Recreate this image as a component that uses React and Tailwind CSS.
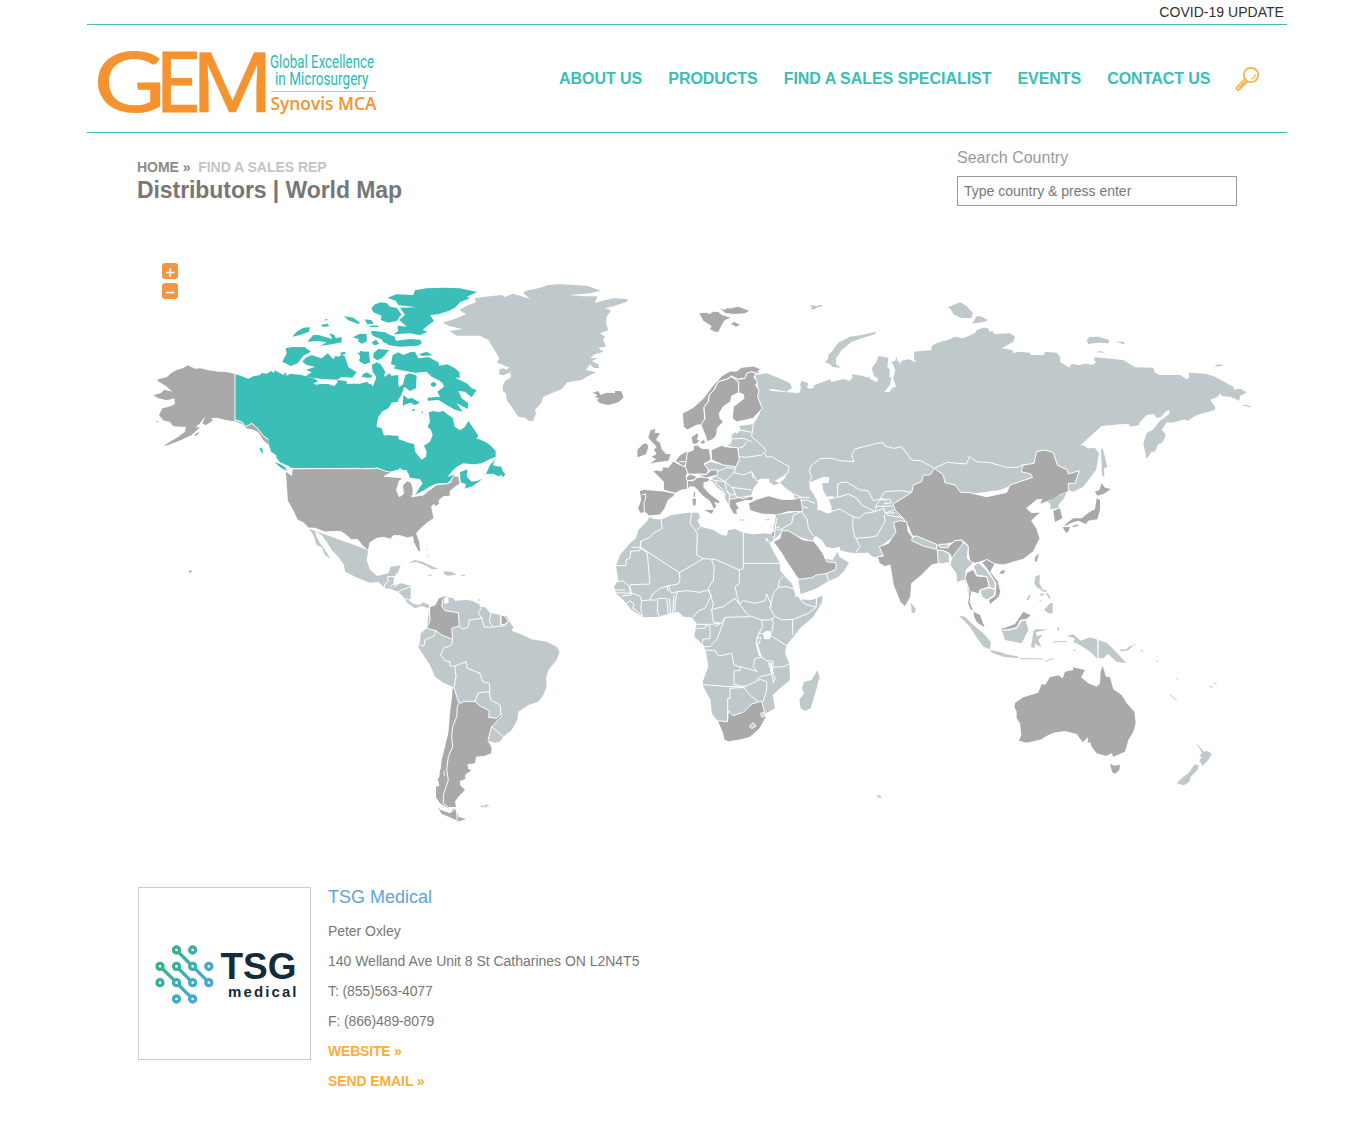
const LIGHT = "#bfc8cb";
const GRAY = "#a9a9a9";
const TEAL = "#3bbdb8";

// Each region is drawn on its own local grid (3 units per pixel).
function Region({ x, y, children }) {
  return (
    <g transform={`translate(${x} ${y}) scale(0.33333)`} strokeLinejoin="round">
      {children}
    </g>
  );
}
const Land = ({ c, d, edge }) => (
  <path d={d} fill={c} stroke={edge ? "#fff" : "none"} strokeWidth={edge ? 3 : 0} />
);
const Borders = ({ d, w = 3 }) => <path d={d} fill="none" stroke="#fff" strokeWidth={w} />;
const Specks = ({ d, c = LIGHT, w = 3 }) => <path d={d} fill="none" stroke={c} strokeWidth={w} />;

function WorldMap() {
  return (
    <svg className="block h-[610px] w-[1163px]" viewBox="137 240 1163 610" aria-label="World map">
      {/* Russia and the north of Asia */}
      <Region x={800} y={290}>
        <Land c={LIGHT} d="M-120,300 L0,310 5,275 25,282 18,298 40,295 42,286 90,268 95,276 130,267 150,272 158,262 155,252 190,258 232,277 234,265 222,258 215,235 228,218 236,198 265,203 262,230 270,240 268,262 274,262 270,285 253,305 268,307 276,295 288,290 280,265 286,240 275,215 285,213 290,200 292,212 298,216 298,225 306,212 325,208 348,217 342,205 342,185 395,180 395,168 412,158 450,148 465,140 490,145 525,130 530,120 550,113 565,115 568,124 580,125 582,132 630,130 645,140 640,155 605,175 637,180 640,190 655,185 690,188 692,195 732,195 735,185 770,188 781,202 780,215 808,233 815,222 840,226 850,221 880,224 888,216 882,210 885,202 970,210 1005,232 1060,233 1065,248 1080,255 1140,255 1160,268 1168,262 1165,248 1215,251 1240,258 1300,290 1305,302 1308,296 1325,298 1340,308 1320,318 1318,332 1290,320 1265,318 1262,310 1252,320 1230,330 1245,350 1245,360 1190,375 1162,393 1155,388 1115,398 1100,397 1085,420 1097,432 1094,445 1085,460 1075,462 1065,485 1055,485 1040,508 1030,460 1040,430 1060,418 1080,392 1108,372 1108,360 1096,365 1085,380 1070,384 1062,372 1040,375 1018,398 1018,405 992,410 985,402 960,403 905,408 842,465 855,468 860,475 885,474 897,490 888,540 850,590 820,605 805,600 780,560 700,560 600,600 300,640 0,660 -120,640Z" />
        <Land c={LIGHT} d="M75,217 L85,205 85,195 100,180 105,170 115,158 150,140 185,135 228,125 225,133 185,145 155,155 125,180 108,205 108,222 122,233 98,231 90,222Z M443,52 L480,37 500,48 518,68 515,83 498,85 480,83 460,72 452,58Z M517,101 L530,78 545,80 563,90 555,95Z M860,150 L870,141 895,140 928,150 925,160 895,158 865,162Z M943,153 L962,155 978,158 970,163Z M888,187 L902,183 914,188Z M1243,230 L1255,222 1270,227Z M28,47 L38,45 48,48 65,44 67,48 50,53 45,58 32,58 36,51Z M903,478 L908,475 912,490 922,530 912,535 913,563 906,555Z" />
        <Specks c={GRAY} d="M1330,346 L1340,347 1352,351" w={2.5} />
      </Region>

      {/* Europe */}
      <Region x={610} y={290}>
        <Land c={LIGHT} d="M282,525 L300,515 340,525 378,530 387,510 385,475 353,467 365,458 365,435 378,427 380,432 392,420 388,408 430,402 440,388 457,355 443,320 445,290 435,255 470,250 500,262 540,280 546,293 530,305 495,298 475,298 490,308 487,325 495,338 508,340 515,328 540,325 540,315 560,313 578,300 570,285 575,272 595,280 588,290 600,298 780,260 780,690 575,680 575,640 420,620 400,628 362,630 357,645 345,625 347,612 320,590 312,578 298,570 320,557 322,540 300,540Z" />
        <Land c={LIGHT} d="M500,715 L500,675 580,662 600,650 780,640 780,722 500,722Z" />
        <path fill="#fff" d="M598,578 L640,560 658,562 656,578 636,580 640,602 650,620 670,618 668,628 655,625 665,650 664,668 640,672 622,660 622,635 612,615 600,598Z M422,620 L430,595 442,580 450,566 478,566 478,576 492,586 512,578 522,590 552,612 554,632 525,640 480,640 432,638Z M494,572 L515,560 530,556 522,568 508,580Z" />
        <Land c={GRAY} edge d="M217,370 L250,352 280,325 310,285 335,258 360,243 380,243 395,232 430,228 455,238 444,244 450,250 440,250 425,245 410,252 405,265 385,268 365,258 350,268 325,275 312,300 298,315 295,335 282,352 284,390 275,405 262,405 232,420 220,410Z" />
        <Land c={GRAY} edge d="M365,260 L385,275 386,308 365,318 362,335 340,350 328,370 330,385 340,395 322,415 320,435 310,448 292,455 285,435 273,405 285,385 282,352 295,335 298,315 312,300 325,275 350,268Z" />
        <Land c={GRAY} edge d="M365,260 L385,268 405,265 410,250 425,245 437,250 432,262 442,275 437,285 447,300 443,320 457,355 430,385 380,396 367,385 370,350 402,325 400,313 386,308 386,276Z" />
        <Land c={GRAY} d="M268,70 L290,68 298,73 310,65 325,66 335,75 362,83 345,90 338,100 325,125 315,125 300,118 305,108 280,92Z M330,55 L345,60 352,54 358,56 385,50 417,62 405,70 370,72 345,68Z M362,102 L375,95 378,100 390,103 378,111 372,106Z M122,420 L137,417 133,428 150,430 138,450 150,458 155,478 168,492 182,493 175,512 140,517 120,521 138,508 125,500 140,492 132,480 140,470 125,455 115,442Z M82,480 L98,463 110,460 115,470 108,493 82,502Z M245,442 L262,430 265,437 260,448 268,452 258,462 248,460Z M272,455 L282,450 285,458 276,462Z M283,660 L312,659 305,671Z M247,626 L258,626 257,646 249,646Z M251,607 L256,607 255,622 251,620Z" />
        <Land c={GRAY} edge d="M128,543 L140,540 155,543 158,530 175,532 190,513 205,522 225,530 234,545 228,560 235,575 232,598 215,600 195,610 160,600 160,575Z" />
        <Land c={GRAY} edge d="M88,603 L100,598 160,603 195,610 192,618 175,630 165,655 150,675 115,678 108,668 90,670 83,655 92,630Z" />
        <Land c={GRAY} edge d="M195,513 L210,495 232,482 232,515 222,530Z" />
        <Land c={GRAY} edge d="M232,487 L250,480 250,466 262,465 275,475 298,476 303,510 282,522 296,540 290,553 262,552 235,553 226,530Z" />
        <Land c={GRAY} edge d="M303,480 L335,466 345,470 383,473 388,508 378,530 340,525 305,510Z" />
        <Land c={GRAY} edge d="M232,572 L250,572 262,562 290,560 298,568 296,575 282,578 282,592 300,612 330,634 326,642 315,637 320,648 312,660 300,635 275,615 255,592 240,590 232,598Z" />
        <Land c={GRAY} edge d="M228,562 L240,552 262,560 250,570 232,572Z M262,556 L290,553 302,540 322,540 322,555 290,564Z" />
        <Land c={GRAY} edge d="M358,628 L392,622 418,618 430,620 428,632 405,632 378,640 388,655 380,660 382,674 370,672 357,648Z" />
        <Land c={GRAY} edge d="M415,640 L440,628 475,617 515,628 550,628 573,622 578,665 535,665 500,675 455,672 420,662Z" />
        <Borders d="M107,612 L107,625 102,640 103,668 M95,615 L107,612 M208,515 L225,515 M388,420 L425,427 M365,447 L400,445 425,455 M385,475 L400,470 410,455 M430,402 L425,440 460,470 468,482 455,495 410,502 387,500 M465,490 L470,502 488,500 505,512 538,530 533,550 520,556 M378,530 L372,548 400,555 425,545 440,572 448,570 M425,545 L430,565 M378,535 L350,533 322,545 M320,560 L345,575 375,545 M345,575 L365,592 425,600 M300,568 L320,572 345,575 M368,592 L378,620 M345,575 L350,600 360,615 378,612 M316,570 L318,580 345,605 M378,620 L400,626 425,618 M348,605 L360,612 358,628" />
        <Borders d="M552,612 L575,622 600,622 M570,632 L590,630 615,640 M580,650 L595,655 M578,665 L595,700 M598,578 L605,560 598,545 603,527 632,505 665,505 700,515 728,512 722,490 780,468 M683,622 L683,582 705,577 745,600 780,602 M655,628 L690,620 705,610 740,628 780,655 M660,665 L690,657 720,665 730,685 M735,685 L780,655" />
        <Specks d="M388,690 L404,690 M466,690 L478,688" />
      </Region>

      {/* Africa and the Middle East */}
      <Region x={600} y={480}>
        <Land c={LIGHT} d="M528,105 L605,95 660,90 690,105 810,80 810,215 765,218 725,212 718,200 700,205 678,200 665,180 648,168 640,172 640,184 580,165 545,155 520,182 518,160Z" />
        <Land c={LIGHT} d="M672,228 L680,238 700,236 712,215 718,230 747,248 730,275 715,290 688,302 650,325 602,343 595,298 640,280Z" />
        <Land c={GRAY} edge d="M545,153 L565,152 610,180 640,183 655,200 670,222 680,245 708,248 708,268 680,280 650,285 635,293 597,298 590,290 560,245 545,220 520,185 540,175Z" />
        <Borders d="M605,95 L622,120 625,145 640,168 M530,150 L545,147 575,130 580,105 605,95 M545,155 L548,148 M525,145 L540,140 M530,115 L525,150 522,182 M680,280 L685,302 M672,232 L700,240 M520,150 L515,180" />
        <Land c={GRAY} d="M515,158 L522,155 522,168 517,168Z" />
        <Land c={LIGHT} d="M148,112 L165,118 185,118 215,105 265,98 295,98 300,112 292,122 302,140 340,150 365,165 380,167 385,150 405,147 430,158 460,163 490,160 515,163 520,180 510,188 500,172 515,205 540,250 540,270 555,290 575,310 585,340 600,358 635,360 668,347 665,370 640,410 600,445 580,470 560,495 555,520 568,550 570,600 540,625 518,645 525,685 498,700 495,715 480,745 450,772 420,780 385,785 372,780 368,760 352,722 335,700 332,660 310,620 308,605 325,560 318,515 310,495 283,470 290,430 275,412 250,410 235,395 210,400 175,410 130,412 95,390 70,360 48,340 42,320 55,300 48,258 60,225 90,190 108,175 115,150 140,125Z" />
        <Land c={GRAY} edge d="M352,722 L382,725 385,692 398,707 430,697 455,672 485,663 492,690 498,712 480,745 450,772 420,780 385,785 372,780 368,760Z" />
        <Land c={LIGHT} edge d="M448,738 L460,728 468,738 455,746Z M482,700 L490,697 494,708 486,712Z" />
        <Borders d="M183,118 L187,145 160,160 150,172 122,184 122,202 95,202 M120,212 L92,214 90,235 78,240 78,257 46,257 M122,184 L120,212 M122,202 L238,278 310,236 M120,202 L140,218 142,222 150,312 92,314 88,322 M145,222 H140 M238,278 L240,300 235,312 200,318 205,335 M310,236 L290,225 292,160 285,150 270,130 275,100 M290,150 L302,140 M310,236 L345,238 418,270 430,265 M430,158 V265 M430,250 H540 M418,270 V310 L405,320 412,350 418,372 M335,240 L343,262 340,300 325,325 333,350 M225,395 L225,370 232,335 260,332 300,337 325,330 333,348 315,385 295,392 278,412 M333,350 L340,370 335,390 340,425 362,430 368,425 M290,433 H330 L362,430 M335,388 L370,380 405,355 418,372 440,400 450,410 375,412 368,425 M418,372 L430,362 465,370 495,362 500,342 508,360 515,380 508,380 525,410 510,420 485,420 452,408 M512,375 L520,340 535,322 560,320 590,330 585,350 600,345 M535,322 L538,300 550,290 M600,358 L615,372 648,382 625,400 580,418 545,420 525,408 M650,355 L648,382 M578,420 V465 M485,420 L488,440 475,462 M515,455 L520,430 515,415 M505,462 L560,497 M375,412 L365,440 350,480 330,500 310,500 M316,510 L345,512 355,528 395,520 402,555 420,560 465,572 472,576 460,560 465,535 485,532 475,505 468,490 475,462 490,460 M290,445 L315,445 318,435 330,440 330,475 308,478 308,490 M420,558 V572 H402 V615 M310,614 L390,620 435,618 M390,625 V655 H383 V725 M390,625 L430,622 455,650 475,665 M402,612 L432,622 480,598 500,605 500,630 490,665 M470,600 L480,590 515,582 505,545 485,532 M515,582 L520,608 526,595 517,575 520,545 505,540 M517,562 L550,560 568,552" />
        <Borders d="M48,305 L70,303 90,322 95,342 M45,330 L75,330 M45,338 L95,340 120,348 125,362 150,360 155,345 180,325 205,318 215,340 232,335 M150,360 L172,360 M178,408 L172,395 174,355 H200 L205,400 M208,355 L212,400 M222,345 L218,398 M88,318 L92,345 M78,372 L90,362 102,372 98,385 108,390 125,408 M125,362 L122,385 128,410 M65,348 L95,345 M468,475 L482,472 478,490 468,488 M345,440 L362,430" />
        <Borders w={6} d="M470,492 L480,528 M512,548 L518,580" />
        <path fill="#fff" d="M488,460 L500,452 515,455 510,478 493,478Z M496,175 L501,174 505,182 500,186Z" />
        <Land c={LIGHT} d="M652,571 L660,595 655,602 650,625 632,685 615,693 602,685 598,660 612,640 606,625 612,606 635,600Z" />
      </Region>

      {/* South and East Asia */}
      <Region x={840} y={430}>
        <Land c={LIGHT} d="M0,20 L300,60 300,150 200,290 120,350 130,375 110,382 98,380 85,368 30,368 0,360Z" />
        <Borders d="M0,92 L42,95 35,75 45,57 110,40 130,38 135,48 160,55 185,50 215,90 245,93 283,115 M283,115 L320,97 380,102 388,80 410,95 450,98 500,112 535,112 550,103 570,108 M0,158 L20,156 60,180 85,183 100,212 130,205 140,215 M120,205 L135,185 180,182 218,187 M0,200 L25,192 50,205 65,225 105,245 M105,245 L110,222 120,210 150,207 155,218 130,222 M0,237 L35,258 55,265 75,250 105,245 132,235 135,250 165,248 M40,260 L38,290 45,325 85,322 110,318 135,275 133,255 M48,325 L60,350 48,366 M140,255 L195,265 M105,230 L158,228 M135,250 L160,240" />
        <Land c={GRAY} edge d="M283,115 L310,135 315,158 345,165 362,187 390,188 440,200 500,187 510,165 578,142 572,132 543,125 550,105 582,100 590,65 615,60 640,68 652,105 682,120 685,132 718,122 705,160 685,160 685,185 660,195 640,208 598,224 606,208 590,210 560,235 575,248 602,246 575,272 590,295 600,325 580,365 550,388 490,405 465,402 440,390 405,400 390,395 385,370 383,345 365,330 330,340 290,350 250,335 215,315 205,290 190,265 165,240 160,222 215,187 220,165 245,155 250,135 270,135Z" />
        <Land c={GRAY} edge d="M160,278 L180,272 200,275 205,305 220,325 290,355 290,345 325,350 345,332 365,330 372,345 350,375 335,385 330,372 318,365 292,360 298,400 275,405 240,440 215,460 212,500 195,530 180,515 160,465 150,405 135,410 118,400 112,380 130,378 118,350 145,340 168,305Z" />
        <Land c={LIGHT} edge d="M218,320 L230,318 290,343 290,358 250,348 215,332Z M298,343 L325,342 325,353 300,353Z M292,360 L310,362 328,372 328,400 318,398 310,402 295,400Z" />
        <Land c={LIGHT} edge d="M372,337 L385,350 382,385 400,400 378,420 378,440 388,470 390,512 383,498 380,460 372,450 350,458 348,430 330,405 335,385 360,352Z" />
        <Land c={GRAY} edge d="M425,398 L440,388 465,402 452,425 475,455 482,485 478,500 450,524 445,510 465,497 468,460 440,415Z" />
        <Land c={LIGHT} edge d="M400,408 L415,398 435,415 465,455 465,478 450,475 440,440 410,435Z M420,480 L450,473 467,478 462,497 440,510 425,500Z" />
        <Land c={GRAY} edge d="M380,428 L400,418 410,438 440,440 448,470 420,480 416,492 395,485 390,515 402,545 390,538 383,520 388,480 375,445Z" />
        <Land c={GRAY} d="M400,545 L420,555 434,592 412,578 403,562Z M478,430 L485,422 496,420 490,432Z M584,392 L586,380 597,370 590,396Z M640,243 L660,235 667,265 645,276Z M668,292 L690,290 685,305 678,308Z M680,280 L700,265 725,265 750,245 765,238 770,205 780,210 780,240 772,268 745,272 738,282 728,278 715,272 695,278 672,290Z M765,185 L778,180 785,160 795,173 813,177 790,192 772,197Z M697,288 L715,282 713,288 700,292Z M488,596 L525,582 550,545 572,556 560,566 540,570 530,590 505,600Z" />
        <Land c={LIGHT} d="M213,518 L228,538 224,549 215,548Z M622,215 L650,200 680,187 672,205 655,225 655,235 630,238 632,222Z M357,557 L375,560 400,585 430,610 452,635 450,658 430,650 405,615 390,590Z M450,660 L480,665 495,672 535,680 535,685 490,680 455,668Z M483,592 L505,602 530,595 545,572 556,568 565,600 545,640 520,635 495,630Z M587,438 L600,435 598,460 610,482 590,472 583,460Z M612,540 L630,520 638,520 638,550 625,550Z M580,602 L590,597 625,599 588,606 590,618 608,615 595,630 604,652 592,645 586,638 583,655 573,650 578,620Z M680,618 L700,613 722,632 750,622 800,638 825,662 860,700 830,695 805,672 790,685 770,685 755,668 725,648 700,635 705,625Z" />
        <Borders w={4} d="M774,625 V690" />
        <Borders d="M490,601 L530,594 545,572 562,568" />
        <Specks w={5} d="M840,661 L860,660 875,648 M600,495 L612,492 M620,490 L630,505 M655,592 V602 M562,510 L570,495 M605,480 L618,484" />
        <Specks w={3} d="M640,636 L680,634 M540,686 L610,687 M615,695 L640,685 M598,510 L606,515 M700,662 L708,660 M884,642 L884,647" />
      </Region>

      {/* Australia and the Pacific */}
      <Region x={950} y={560}>
        <Land c={GRAY} d="M193,440 L196,428 220,412 265,398 275,372 285,375 300,352 325,346 338,355 345,335 370,330 368,322 405,330 393,352 415,370 440,380 450,370 452,335 458,318 468,350 480,352 490,388 515,405 530,430 553,455 557,490 550,515 535,540 525,575 490,590 485,580 468,588 440,580 425,560 420,545 413,550 414,532 398,547 380,522 345,513 310,518 285,530 275,538 230,548 207,542 214,525 210,490 200,475 200,455Z M480,612 L495,617 510,614 508,630 495,641 487,637Z" />
        <Land c={LIGHT} d="M738,548 L755,567 762,575 770,572 786,581 775,600 758,617 748,603 755,592 748,588 756,578Z M735,612 L747,618 742,630 722,650 718,665 702,676 680,670 700,650 715,640Z" />
        <Specks w={3} d="M660,405 L680,422 M780,381 L788,380 M792,372 L800,368 M572,268 L578,276 M618,303 L624,304 M682,354 V359 M533,268 L548,258" />
      </Region>

      {/* South America */}
      <Region x={400} y={590}>
        <Land c={LIGHT} d="M143,14 L133,28 133,42 146,38 145,22 160,25 165,32 200,30 215,32 238,42 240,50 255,52 270,68 300,75 320,78 330,98 340,110 335,122 360,132 395,148 440,155 470,170 479,185 470,210 445,240 438,265 440,290 430,315 415,335 385,345 355,365 352,390 335,420 310,440 300,455 285,458 265,452 160,380 160,292 130,278 105,260 90,225 70,195 55,172 60,155 62,130 80,115 88,55 105,45 115,25Z" />
        <Land c={GRAY} edge d="M143,14 L128,30 125,48 135,62 175,68 178,108 155,115 158,148 125,135 108,122 80,115 90,92 88,50 105,45 115,25Z" />
        <Land c={GRAY} edge d="M303,76 L312,76 324,92 314,104 302,104Z" />
        <Land c={GRAY} d="M158,293 L164,300 175,335 185,340 190,334 225,334 240,348 268,362 266,380 290,385 303,370 306,378 275,410 268,430 264,452 275,475 273,490 255,497 228,500 225,520 202,523 205,537 214,541 195,555 196,567 180,573 180,585 195,600 175,620 165,635 168,652 145,655 120,640 108,622 108,590 118,587 113,565 118,562 120,538 131,535 131,555 135,560 132,540 122,540 125,510 135,470 145,430 150,370 156,320Z M115,655 L150,668 160,655 170,660 175,680 198,688 175,694 150,682 125,672Z" />
        <Borders d="M162,292 L175,335 185,340 190,334 225,334 240,348 268,362 266,382 290,385 302,372 M303,370 L306,378 275,410 264,450 M178,337 L172,350 170,380 158,410 155,440 158,470 145,500 140,540 145,570 130,615 130,640 145,652 168,653 M168,653 L150,668 120,658 M168,655 L172,690 M178,108 L190,118 205,110 208,90 245,85 235,68 245,52 M245,82 L252,110 270,112 305,108 315,106 325,92 M273,68 L268,95 278,110 M303,78 L302,105 M108,122 L102,138 75,150 72,168 60,165 M158,148 L155,165 130,175 122,195 135,212 150,215 150,228 165,228 168,260 162,292 M165,228 L198,215 202,235 240,250 248,275 268,280 270,305 235,308 225,334 M268,305 L272,330 300,345 303,372 M275,410 L310,440" />
        <Specks w={4} d="M242,650 L266,646 M256,652 L262,644 M234,30 H239" />
      </Region>

      {/* United States, Mexico and the Caribbean */}
      <Region x={270} y={440}>
        <Land c={LIGHT} d="M117,266 L295,330 290,360 300,390 322,408 355,400 362,380 392,376 385,395 372,410 370,435 395,430 422,438 422,475 415,480 430,492 448,495 460,487 478,495 475,505 455,498 435,505 412,488 400,470 385,455 360,446 345,445 325,425 300,428 265,415 225,395 222,375 205,350 185,330 170,305 155,285 135,273 140,290 150,310 165,330 182,357 165,345 155,322 140,315 130,285Z" />
        <Land c={GRAY} edge d="M46,92 L64,106 67,86 318,84 365,97 342,110 385,102 405,108 415,120 388,122 380,150 388,170 400,162 398,135 412,122 425,128 430,148 425,170 460,165 475,152 500,134 535,130 545,125 550,108 565,108 572,130 550,145 540,155 542,168 520,170 508,180 508,192 497,200 492,193 485,200 492,235 470,250 450,268 440,280 450,310 452,338 443,332 430,305 428,290 412,294 390,287 370,287 362,298 340,292 320,295 300,308 295,332 280,320 262,298 245,300 228,285 212,274 165,276 135,265 115,264 100,248 82,240 68,210 52,182 50,150Z" />
        <Borders d="M343,443 L345,432 355,425 352,410 372,410 M370,432 L360,442 M372,440 L385,432 M385,455 L395,450 422,440 M415,478 L405,475" />
        <Land c={LIGHT} d="M415,368 L435,360 460,366 480,376 505,387 485,388 470,378 440,366Z M522,394 L545,395 560,404 535,407 522,403Z" />
        <Specks d="M473,406 H486 M574,406 H585 M468,330 L472,326 M470,343 L476,350" />
      </Region>

      {/* Alaska and western Canada */}
      <Region x={145} y={255}>
        <Land c={GRAY} d="M270,357 L245,351 220,350 190,346 165,340 150,341 128,331 115,339 95,345 80,353 65,367 38,373 38,378 62,392 82,410 58,404 48,414 25,421 40,430 65,436 88,430 90,448 72,455 52,460 42,480 55,496 75,501 85,514 105,515 122,515 120,530 100,545 55,572 70,570 110,554 140,540 165,517 152,517 165,505 182,483 172,505 182,511 203,497 200,490 215,488 245,496 270,499 290,506 305,520 325,524 340,532 355,556 369,568 370,555 352,540 338,520 320,505 302,515 290,502 270,495Z M147,540 L163,530 160,538 150,543Z M32,498 L42,499 38,502Z" />
        <Land c={TEAL} d="M270,357 L290,364 310,371 325,364 345,360 350,354 365,356 378,348 386,354 390,346 400,352 415,360 422,352 425,362 437,356 470,360 490,367 506,370 520,378 505,386 515,389 530,386 553,388 567,394 578,382 575,375 605,378 605,386 640,386 665,390 678,386 684,396 696,380 712,366 760,360 760,440 740,443 730,460 710,470 696,490 694,515 708,525 715,542 760,542 760,650 720,648 695,638 440,640 430,632 405,622 395,610 393,600 378,590 370,565 370,553 352,540 338,520 320,505 302,515 290,500 270,495Z" />
        <Borders d="M270,357 V495 L290,500 302,515 320,505 338,520 352,540 370,553 M440,641 H690 L695,636 720,648 760,651" />
        <Land c={TEAL} d="M422,280 L440,276 480,277 498,290 475,302 458,325 438,333 412,320 425,295Z M472,320 L482,308 500,300 515,305 530,310 548,295 565,313 572,302 580,306 590,298 600,305 610,336 635,352 622,368 590,366 575,374 530,372 480,365 500,352 483,345 510,335 485,330Z M442,245 L455,230 475,218 495,217 492,230 465,240Z M487,260 L505,240 520,240 562,252 553,235 568,240 572,250 590,246 590,262 560,268 525,273 545,262 520,258Z M527,210 L548,206 553,213 535,216Z M535,196 L545,192 550,196Z M597,184 L625,188 645,203 640,207 610,196Z M660,193 L680,196 684,206 668,208Z M623,247 L645,236 665,238 665,255 652,266 640,260 640,252Z M680,262 L693,255 702,266 690,271Z M678,228 L720,232 735,240 750,245 750,272 715,262 705,245 685,238Z M636,292 L655,296 670,288 672,305 676,322 660,328 640,315 650,308Z M388,622 L405,627 420,637 426,648 410,640Z M343,580 L352,580 354,598 347,588Z M585,293 L600,290 602,298 590,299Z M648,366 L660,358 680,362 680,368Z M680,212 H698 V215 H684Z" />
      </Region>

      {/* Eastern Canada, Greenland and Iceland */}
      <Region x={360} y={275}>
        <Land c={TEAL} d="M60,300 L75,305 88,295 100,308 105,325 118,335 135,325 128,350 120,368 95,382 75,398 55,425 49,455 65,460 72,482 90,480 115,492 145,503 162,507 165,530 185,554 198,545 200,530 192,512 210,500 218,480 213,465 203,455 210,440 206,412 220,408 235,411 250,408 262,418 278,428 284,455 300,466 315,455 325,438 340,460 355,482 350,490 375,500 390,510 407,528 407,545 390,552 365,565 340,568 310,565 290,575 275,590 262,606 285,598 275,618 260,626 230,627 205,638 165,660 L180,635 188,625 170,615 150,612 145,595 120,580 90,590 50,577 0,580 0,326 20,320 38,335 50,305Z" />
        <path fill="#fff" d="M75,605 L95,590 108,585 140,585 148,608 180,612 188,626 175,635 170,655 160,655 158,635 150,620 130,618 125,635 122,655 112,650 118,622 125,610Z" />
        <path fill={GRAY} d="M130,635 L140,622 155,632 158,660 135,660Z" />
        <Borders d="M205,638 L230,627 262,626 273,616 280,602 297,602 300,628" />
        <Land c={TEAL} d="M300,592 L322,583 320,605 335,620 350,618 367,612 340,632 315,641 318,628 302,622Z M407,552 L390,570 378,597 400,596 415,604 425,600 430,607 436,598 428,588 424,575 408,573 398,570Z M82,68 L110,58 160,60 165,46 200,40 250,38 300,40 352,51 320,65 330,70 300,82 285,98 265,108 235,118 210,120 222,138 205,150 188,165 203,170 180,181 150,175 100,178 115,168 112,152 140,155 118,135 135,120 120,98 168,97 115,90 108,78Z M62,82 L80,84 90,95 110,98 124,118 110,138 85,143 62,135 65,122 40,112 34,100 45,88Z M32,168 L60,170 70,180 100,190 110,197 150,192 180,194 186,204 175,212 120,215 85,210 70,195 38,182Z M15,135 L35,138 40,146 22,147Z M0,178 L18,178 20,200 0,205Z M36,203 L48,195 57,206 42,210Z M28,152 H55 V156 H30Z M40,235 L55,222 87,225 75,240 65,250 52,256 40,248Z M0,228 L28,232 28,255 15,268 0,260Z M35,270 L50,262 62,268 76,290 70,308 50,308 38,290Z M5,300 L20,292 38,303 22,308Z M95,255 L98,240 115,232 130,240 150,232 165,230 175,250 205,246 235,262 238,272 262,268 285,280 298,292 300,308 285,308 320,325 335,340 350,345 335,367 315,350 295,348 305,370 325,385 323,402 290,385 308,410 285,404 260,390 235,375 203,377 203,368 240,365 232,350 252,335 248,325 235,315 215,305 200,290 165,293 120,285 100,280 108,272 93,268Z M178,237 L200,230 218,241 185,243Z M130,360 L145,372 155,368 180,383 165,390 150,383 128,392Z M213,325 L222,320 230,328 222,337 213,332Z M136,300 L150,295 170,302 168,340 150,348 128,332Z M150,405 L163,402 165,408Z M183,410 L189,410 188,416Z" />
        <Land c={LIGHT} d="M248,143 L290,130 318,118 298,105 320,92 348,82 345,70 375,65 425,60 435,66 458,56 480,62 510,72 490,55 495,48 540,38 565,30 600,28 680,32 722,47 690,55 628,60 665,64 712,64 705,83 760,70 803,72 800,80 765,92 735,100 753,106 740,125 738,145 745,165 720,175 735,185 730,195 738,215 715,218 730,230 705,238 690,248 713,250 695,258 715,268 718,280 700,278 690,268 678,285 708,292 680,305 665,315 622,322 605,342 575,355 550,365 543,385 525,405 528,415 520,438 508,438 495,428 475,425 455,395 440,375 438,355 430,350 427,335 435,318 452,308 452,292 430,301 418,298 418,283 430,280 440,284 448,278 410,262 418,250 400,220 385,195 360,182 290,182 268,168 308,162 265,152Z" />
        <Land c={GRAY} d="M698,353 L715,348 722,360 740,353 765,355 765,348 783,348 791,367 775,382 745,390 720,385 710,375 718,370 705,366 712,360Z" />
      </Region>
      <Specks c={GRAY} w={2} d="M189,571.5 H191.5" />
      <Specks w={2} d="M877,796 L881,797" />
    </svg>
  );
}

function GemLogo() {
  return (
    <svg className="block h-[70px] w-[282px] overflow-visible" viewBox="97 47 282 70">
      <g fill="#f69331" stroke="#f69331" fontSize="83">
        <text x="94" y="112.3" fontFamily="Lato" strokeWidth="1.200" textLength="71" lengthAdjust="spacingAndGlyphs">G</text>
        <text x="156" y="112.3" fontFamily="Lato" strokeWidth="1.200" textLength="44" lengthAdjust="spacingAndGlyphs">E</text>
        <text x="192" y="112.3" fontFamily="Roboto" strokeWidth="0.300" textLength="81" lengthAdjust="spacingAndGlyphs">M</text>
      </g>
      <g fill="#2bbab4" fontFamily="Roboto" fontSize="18">
        <text x="270" y="68" textLength="104" lengthAdjust="spacingAndGlyphs">Global Excellence</text>
        <text x="275" y="85" textLength="93.5" lengthAdjust="spacingAndGlyphs">in Microsurgery</text>
      </g>
      <path d="M271,91.5 H376" stroke="#8fd8d5" />
      <text x="270.5" y="110" fill="#f6922f" fontFamily="Open Sans" fontWeight="600" fontSize="17.5" textLength="106" lengthAdjust="spacingAndGlyphs">Synovis MCA</text>
    </svg>
  );
}

const NODES = [[139.5, 240], [188, 240], [90, 289], [139.5, 289], [188, 289], [236.5, 289], [90, 338], [139.5, 338], [188, 338], [236.5, 338], [139.5, 387], [188, 387]];

function TsgLogo() {
  return (
    <svg className="block h-[64px] w-[146px] overflow-visible" viewBox="152 942 146 64">
      <defs>
        <linearGradient id="tsg" gradientUnits="userSpaceOnUse" x1="87" y1="260" x2="230" y2="370">
          <stop offset="0" stopColor="#35b082" />
          <stop offset="0.5" stopColor="#3dafb0" />
          <stop offset="1" stopColor="#45a8dc" />
        </linearGradient>
      </defs>
      <g transform="translate(130 870) scale(0.33333)" stroke="url(#tsg)" fill="none">
        <path strokeWidth="10" d="M143,244 L184,285 M192,293 L233,334 M94,293 L136,334 M143,342 L184,383 M143,293 L184,334" />
        {NODES.map(([x, y]) => (
          <circle key={`${x}-${y}`} cx={x} cy={y} r="9" strokeWidth="10" fill="#fff" />
        ))}
      </g>
      <g fill="#142b3a" fontFamily="Liberation Sans" fontWeight="700">
        <text x="220.500" y="979" fontSize="37" textLength="76" lengthAdjust="spacingAndGlyphs">TSG</text>
        <text x="228" y="996.500" fontSize="15" textLength="68.500">medical</text>
      </g>
    </svg>
  );
}

const NAV = ["ABOUT US", "PRODUCTS", "FIND A SALES SPECIALIST", "EVENTS", "CONTACT US"];

export default function App() {
  return (
    <div className="h-[1126px] overflow-hidden bg-white font-['Liberation_Sans',Arial,sans-serif] text-[#777777]">
      <div className="ml-[87px] w-[1200px]">
        <div className="flex h-[25px] justify-end border-b border-[#3bbdb8] pr-[3px] text-[14px] leading-[25px] tracking-[0.03px] text-[#333333]">
          COVID-19 UPDATE
        </div>
        <header className="flex h-[108px] border-b border-[#3bbdb8]">
          <div className="ml-[10px] pt-[22px]"><GemLogo /></div>
          <nav className="mt-[42px] ml-auto flex h-6 gap-[26px] text-[16px] leading-6 font-bold tracking-[-0.04px] text-[#3bbdb8]">
            {NAV.map((n) => <a key={n} className="whitespace-nowrap">{n}</a>)}
          </nav>
          <svg className="mt-[41px] mr-[26px] ml-[24.5px] h-[26px] w-[26px]" viewBox="0 0 26 26" fill="none" stroke="#fbb040" strokeLinecap="round">
            <circle cx="16" cy="9" r="7.200" strokeWidth="1.700" />
            <path strokeWidth="1.600" d="M10,13 L1.700,21.200 Q1,22.500 2,23.500 Q3.300,24.300 4.300,23.500 L12.500,15.500 M4.500,21.300 L11,15" />
            <path strokeWidth="1.100" d="M20,8.500 Q20,12 16.500,13" />
          </svg>
        </header>
        <div className="flex h-[107px] justify-between pr-[50px] pl-[50px]">
          <div className="pt-[26px] font-bold">
            <div className="text-[14px] leading-4 tracking-[-0.03px] whitespace-pre text-[#8b8b8b]">HOME »  <span className="text-[#c4c4c4]">FIND A SALES REP</span></div>
            <h1 className="text-[23px] leading-[30px] tracking-[-0.07px]">Distributors | World Map</h1>
          </div>
          <div className="w-[280px] pt-[15px]">
            <label className="block text-[16px] leading-5 text-[#999999]">Search Country</label>
            <input className="mt-[8px] block h-[30px] w-full border border-[#999999] px-[6px] text-[14px] placeholder:text-[#777777]" placeholder="Type country & press enter" />
          </div>
        </div>
        <main className="relative ml-[50px]">
          <WorldMap />
          <div className="absolute top-[23px] left-[25px] flex flex-col gap-1">
            {["M4,9.500 H12.500 M8.250,5.250 V13.750", "M4,9.500 H12.500"].map((d) => (
              <button key={d} className="h-4 w-4 rounded-[3px] bg-[#f5953f]">
                <svg className="block" width="16" height="16" viewBox="0 0 16 16" stroke="#fff" strokeWidth="1.600"><path d={d} /></svg>
              </button>
            ))}
          </div>
        </main>
        <section className="ml-[51px] flex pt-[37px]">
          <div className="flex h-[173px] w-[173px] items-center justify-center border border-[#cccccc]"><TsgLogo /></div>
          <div className="ml-[17px] text-[14px] leading-[30px]">
            <h2 className="mb-[9px] text-[18px] leading-5 text-[#5fa5d5]">TSG Medical</h2>
            <p className="tracking-[-0.05px]">Peter Oxley</p>
            <p className="tracking-[-0.02px]">140 Welland Ave Unit 8 St Catharines ON L2N4T5</p>
            <p className="tracking-[-0.12px]">T: (855)563-4077</p>
            <p className="tracking-[-0.12px]">F: (866)489-8079</p>
            <p className="font-bold tracking-[-0.2px] text-[#fbae3c]">WEBSITE »</p>
            <p className="font-bold tracking-[-0.1px] text-[#fbae3c]">SEND EMAIL »</p>
          </div>
        </section>
      </div>
    </div>
  );
}
